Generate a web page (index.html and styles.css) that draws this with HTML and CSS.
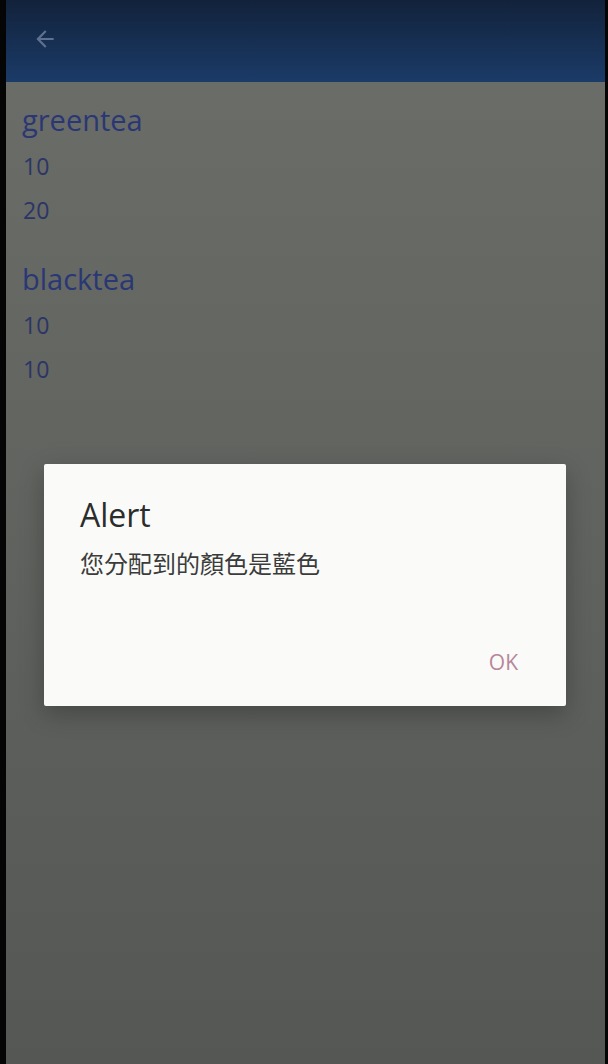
FILE: index.html
```html
<!DOCTYPE html>
<html lang="zh-Hant">
<head>
  <meta charset="UTF-8" />
  <meta name="viewport" content="width=device-width, initial-scale=1.0" />
  <title>Tea</title>
  <link rel="stylesheet" href="styles.css">
</head>
<body>
  <div class="screen">
    <header class="appbar">
      <button class="back-btn" title="Back">
        <svg viewBox="0 0 24 24" width="26" height="26">
          <path d="M20 11H7.8l5.6-5.6L12 4l-8 8 8 8 1.4-1.4L7.8 13H20z" fill="currentColor" />
        </svg>
      </button>
    </header>

    <main class="content">
      <section class="tea">
        <div class="tea-name">greentea</div>
        <div class="tea-value">10</div>
        <div class="tea-value">20</div>
      </section>
      <section class="tea">
        <div class="tea-name">blacktea</div>
        <div class="tea-value">10</div>
        <div class="tea-value">10</div>
      </section>
    </main>

    <!-- Alert dialog -->
    <div class="dialog">
      <div class="dialog-title">Alert</div>
      <div class="dialog-msg">您分配到的顏色是藍色</div>
      <div class="dialog-actions">
        <button class="dialog-btn">OK</button>
      </div>
    </div>
  </div>
</body>
</html>
```

FILE: styles.css
```css
:root {
  --frame: #050505;
  --scrim-top: #6b6e69;
  --scrim-bottom: #555754;
  --bar-top: #12223b;
  --bar-bottom: #1b3b68;
  --name: #2a3775;
  --value: #2c3565;
  --dialog: #fafbf8;
  --ink: #2b2d2c;
  --accent: #b8869a;
}

* {
  box-sizing: border-box;
  margin: 0;
  padding: 0;
}

body {
  background: var(--frame);
  font-family: "Open Sans", "Noto Sans CJK TC", sans-serif;
  height: 1064px;
  overflow: hidden;
}

.screen {
  position: relative;
  height: 1064px;
  margin: 0 3px 0 6px;
  background: linear-gradient(var(--scrim-top), var(--scrim-bottom));
  display: flex;
  flex-direction: column;
}

.appbar {
  height: 82px;
  background: linear-gradient(var(--bar-top), var(--bar-bottom));
  display: flex;
  align-items: center;
  padding-left: 26px;
  padding-bottom: 4px;
}

.back-btn {
  border: none;
  background: none;
  color: #5d7190;
  display: flex;
}

.content {
  padding: 14px 16px 0;
  display: flex;
  flex-direction: column;
  gap: 23px;
}

.tea-name {
  font-size: 29px;
  line-height: 48px;
  color: var(--name);
}

.tea-value {
  font-size: 23px;
  line-height: 44px;
  color: var(--value);
  padding-left: 1px;
}

/* Alert */
.dialog {
  position: absolute;
  top: 464px;
  left: 38px;
  width: 522px;
  height: 242px;
  background: var(--dialog);
  border-radius: 2px;
  box-shadow: 0 8px 24px rgba(0, 0, 0, .25);
  padding: 30px 36px 0;
  display: flex;
  flex-direction: column;
}

.dialog-title {
  font-size: 32px;
  line-height: 42px;
  color: var(--ink);
}

.dialog-msg {
  margin-top: 12px;
  font-size: 24px;
  line-height: 32px;
  color: #3a3c3b;
}

.dialog-actions {
  margin-top: auto;
  margin-bottom: 30px;
  display: flex;
  justify-content: flex-end;
}

.dialog-btn {
  border: none;
  background: none;
  font-family: inherit;
  font-size: 21px;
  color: var(--accent);
  padding: 0 12px;
}
```
